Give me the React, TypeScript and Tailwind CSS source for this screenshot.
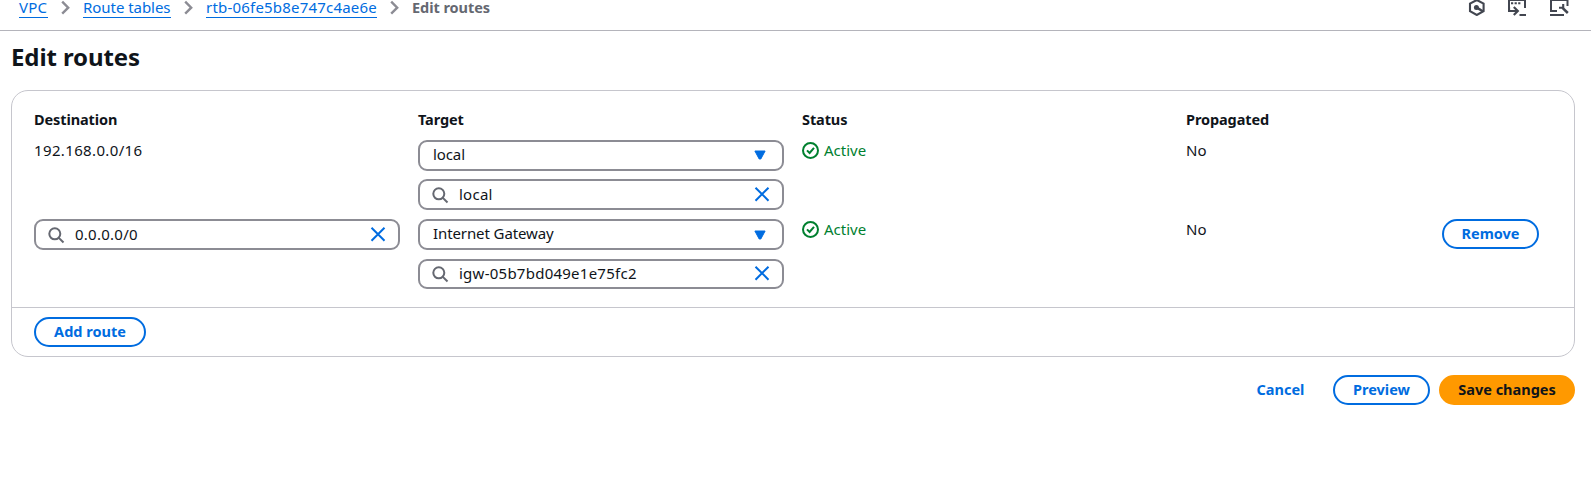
import type { ReactNode } from "react";

function Chevron() {
  return (
    <svg className="block h-4 w-[10px] shrink-0" viewBox="0 0 10 16" fill="none" stroke="#8c8c94" strokeWidth="2.4">
      <path d="M1.2 1.7 7.2 7.7 1.2 13.7" />
    </svg>
  );
}

function SearchIcon() {
  return (
    <svg className="block size-[17px] shrink-0" viewBox="0 0 17 17" fill="none" stroke="#656871" strokeWidth="2">
      <circle cx="6.8" cy="6.8" r="5.5" />
      <path d="m10.6 10.6 4.9 4.9" />
    </svg>
  );
}

function ClearIcon() {
  return (
    <svg className="block size-[16px] shrink-0" viewBox="0 0 16 16" fill="none" stroke="#006ce0" strokeWidth="2">
      <path d="m1.5 1.7 13 13m0-13-13 13" />
    </svg>
  );
}

function CaretIcon() {
  return (
    <svg className="block h-[10px] w-3 shrink-0" viewBox="0 0 12 10" fill="#006ce0" stroke="#006ce0" strokeLinejoin="round">
      <path d="M.9 1h10.2L6.8 9H5.2z" />
    </svg>
  );
}

function StatusIcon() {
  return (
    <svg className="block size-[17px] shrink-0" viewBox="0 0 17 17" fill="none" stroke="#00802f" strokeWidth="2">
      <circle cx="8.5" cy="8.5" r="7.5" />
      <path d="m5 8.4 2.6 2.6L12 5.8" />
    </svg>
  );
}

function Select({ label, low }: { label: string; low?: boolean }) {
  return (
    <div className="flex h-[31px] w-[366px] items-start rounded-[9px] border-2 border-[#8c8c94] pr-[16px] pl-[13px]">
      <span className="mt-[2px] grow tracking-[-0.1px]">{label}</span>
      <span className={low ? "mt-[9px]" : "mt-[8px]"}>
        <CaretIcon />
      </span>
    </div>
  );
}

function SearchField({ value, short, low }: { value: string; short?: boolean; low?: boolean }) {
  return (
    <div
      className={`flex w-[366px] items-start rounded-[9px] border-2 border-[#8c8c94] pr-[12px] pl-[12px] ${short ? "h-[30px]" : "h-[31px]"}`}
    >
      <span className={`mr-[10px] ${short ? "mt-[5px]" : "mt-[6px]"}`}>
        <SearchIcon />
      </span>
      <span className={`grow tracking-[0.25px] ${low ? "mt-[3px]" : "mt-[2px]"}`}>{value}</span>
      <span className={short ? "mt-[4px]" : "mt-[5px]"}>
        <ClearIcon />
      </span>
    </div>
  );
}

function Button({ children, className }: { children: ReactNode; className: string }) {
  return (
    <button
      className={`flex h-[30px] items-center justify-center rounded-full border-2 pb-[3px] text-[14.5px] leading-5 font-bold ${className}`}
    >
      {children}
    </button>
  );
}

function Status() {
  return (
    <div className="flex text-[#00802f]">
      <span className="mt-[2px] mr-[5px]">
        <StatusIcon />
      </span>
      Active
    </div>
  );
}

const columns = "grid grid-cols-[384px_384px_384px_256px_97px]";

export default function App() {
  return (
    <div className="h-[492px] overflow-hidden bg-white font-['Noto_Sans',sans-serif] text-[15px] leading-5 text-[#0f141a]">
      <header className="flex h-[31px] items-start justify-between border-b border-[#b4b4bb] pr-[22px] pl-[19px]">
        <nav className="flex leading-[14px] text-[#006ce0]">
          <a className="h-[18px] w-[29px] border-b border-[#006ce0] tracking-[0.2px]">VPC</a>
          <span className="mr-[12px] ml-[13px]"><Chevron /></span>
          <a className="h-[18px] w-[88px] border-b border-[#006ce0] tracking-[-0.05px] whitespace-nowrap">Route tables</a>
          <span className="mr-[12px] ml-[13px]"><Chevron /></span>
          <a className="h-[18px] w-[171px] border-b border-[#006ce0] tracking-[0.2px]">rtb-06fe5b8e747c4ae6e</a>
          <span className="mr-[12px] ml-[13px]"><Chevron /></span>
          <span className="text-[14.5px] font-bold tracking-[-0.05px] text-[#656871]">Edit routes</span>
        </nav>
        <div className="flex">
          <svg className="mr-[23px] block h-[16px] w-[17px]" viewBox="0 0 17 16" fill="none" stroke="#424650" strokeWidth="2.1">
            <path d="M8.8 0 15.6 3.6v7.6L8.8 15 2 11.2V3.6z" />
            <circle cx="8.4" cy="7.4" r="2.5" fill="#424650" stroke="none" />
            <path d="m8.4 7.4 6.4 3.8" strokeWidth="2.4" />
          </svg>
          <svg className="mr-[24px] block h-[16px] w-[18px]" viewBox="0 0 18 16" fill="none" stroke="#424650" strokeWidth="2">
            <path d="M1 9V0h16v8" />
            <path d="M3 3.2h9.4" strokeDasharray="2.2 1.4" />
            <path d="M1 7v4h8.5M5.8 7l4 4-4 4" strokeWidth="2.2" />
            <path d="M11.5 15H18" />
          </svg>
          <svg className="block h-[16px] w-[19px]" viewBox="0 0 19 16" fill="none" stroke="#424650" strokeWidth="2">
            <path d="M17.5 6V0H1v11h6M0 15h14" />
            <path d="m12.5 7.8 5.3 5.2" strokeWidth="2.5" />
            <path d="M13.2 4v3.8H9" strokeWidth="2.1" />
          </svg>
        </div>
      </header>
      <main className="pt-[10px] pr-4 pl-[11px]">
        <h1 className="pb-[17px] text-2xl leading-8 font-bold tracking-[-0.1px]">Edit routes</h1>
        <section className="h-[267px] rounded-[17px] border border-[#c6c6cd]">
          <div className="h-[217px] border-b border-[#c6c6cd] pt-[18px] pl-[22px]">
            <div className={`${columns} h-[31px] text-[14.5px] font-bold tracking-[-0.1px]`}>
              <span>Destination</span>
              <span>Target</span>
              <span>Status</span>
              <span>Propagated</span>
            </div>
            <div className={`${columns} h-[79px]`}>
              <span className="tracking-[0.36px]">192.168.0.0/16</span>
              <div className="flex flex-col gap-2">
                <Select label="local" />
                <SearchField value="local" low />
              </div>
              <Status />
              <span>No</span>
            </div>
            <div className={columns}>
              <SearchField value="0.0.0.0/0" low />
              <div className="flex flex-col gap-[9px]">
                <Select label="Internet Gateway" low />
                <SearchField value="igw-05b7bd049e1e75fc2" short />
              </div>
              <Status />
              <span>No</span>
              <Button className="w-[97px] border-[#006ce0] text-[#006ce0]">Remove</Button>
            </div>
          </div>
          <div className="pt-[9px] pl-[22px]">
            <Button className="w-[112px] border-[#006ce0] text-[#006ce0]">Add route</Button>
          </div>
        </section>
        <div className="flex justify-end pt-[18px]">
          <Button className="mr-[9px] w-[87px] border-transparent text-[#006ce0]">Cancel</Button>
          <Button className="mr-[9px] w-[97px] border-[#006ce0] text-[#006ce0]">Preview</Button>
          <Button className="w-[136px] border-[#ff9900] bg-[#ff9900]">Save changes</Button>
        </div>
      </main>
    </div>
  );
}
